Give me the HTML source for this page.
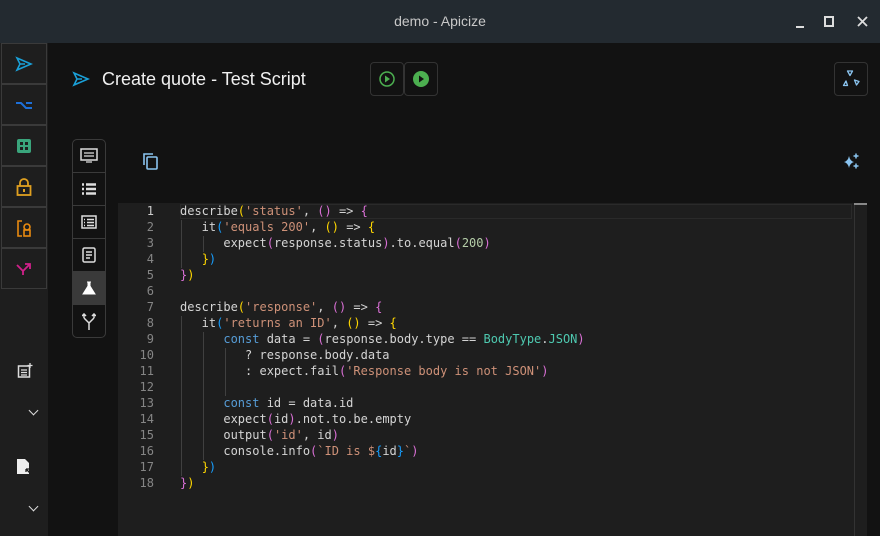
<!DOCTYPE html>
<html><head><meta charset="utf-8"><style>
*{margin:0;padding:0;box-sizing:border-box}
body{width:880px;height:536px;overflow:hidden;background:#121212;font-family:"Liberation Sans",sans-serif;position:relative}
.tb{position:absolute;left:0;top:0;width:880px;height:43px;background:#232a30;color:#c8c8c8;font-size:14px;text-align:center;line-height:42px}
.side{position:absolute;left:0;top:43px;width:48px;height:493px;background:#1e1e1e}
.sb{position:absolute;left:1px;width:46px;height:41px;border:1px solid #3a3a3a;display:flex;align-items:center;justify-content:center}
.vt{position:absolute;left:72px;top:139px;width:34px;height:199px;border:1px solid #3a3a3a;border-radius:5px;overflow:hidden}
.vt div{height:33px;border-bottom:1px solid #3a3a3a;display:flex;align-items:center;justify-content:center}
.btn{position:absolute;top:62px;width:34px;height:34px;border:1px solid #333;border-radius:4px;display:flex;align-items:center;justify-content:center}
.ed{position:absolute;left:118px;top:203px;width:749px;height:333px;background:#1e1e1e;font-family:"DejaVu Sans Mono",monospace;font-size:12px;color:#d4d4d4}
.ln{position:absolute;left:0;width:36px;text-align:right;color:#858585}
.cd{position:absolute;left:62px;white-space:pre}
.k{color:#569cd6}.s{color:#ce9178}.n{color:#b5cea8}.t{color:#4ec9b0}
.y{color:#ffd700}.p{color:#da70d6}.b{color:#179fff}
.g{position:absolute;width:1px;background:#404040}
</style></head><body>
<div class="tb">demo - Apicize
<span style="position:absolute;left:467px;top:0;width:0"></span>
<span style="position:absolute;left:467px"></span>
<span style="position:absolute;left:467px"></span>
<span style="position:absolute;left:796px;top:26px;width:8px;height:2px;background:#ddd"></span>
<span style="position:absolute;left:824px;top:16px;width:10px;height:11px;border:2px solid #ddd"></span>
<svg style="position:absolute;left:857px;top:16px" width="11" height="11"><path d="M1 1l9 9M10 1l-9 9" stroke="#ddd" stroke-width="1.8"/></svg>
</div>
<div class="side">
<div class="sb" style="top:0"><svg width="18" height="16" viewBox="0 0 18 16"><path d="M2 2L16 8L2 14L5 8Z M5 8H10" fill="none" stroke="#1aa0d8" stroke-width="1.6"/></svg></div>
<div class="sb" style="top:41px"><svg width="18" height="12"><path d="M1 4h5l5 5h6M11 4h6" fill="none" stroke="#1d6fd8" stroke-width="2"/></svg></div>
<div class="sb" style="top:82px"><svg width="14" height="14"><rect width="14" height="14" rx="2" fill="#3aa57c"/><rect x="3" y="3" width="3" height="3" fill="#1e1e1e"/><rect x="8" y="3" width="3" height="3" fill="#1e1e1e"/><rect x="3" y="8" width="3" height="3" fill="#1e1e1e"/><rect x="8" y="8" width="3" height="3" fill="#1e1e1e"/></svg></div>
<div class="sb" style="top:123px"><svg width="16" height="18"><path d="M4 8V5a4 4 0 0 1 8 0v3" fill="none" stroke="#e0a020" stroke-width="1.8"/><rect x="1.5" y="8" width="13" height="9" fill="none" stroke="#e0a020" stroke-width="1.8"/><rect x="7" y="11" width="2" height="3" fill="#e0a020"/></svg></div>
<div class="sb" style="top:164px"><svg width="16" height="18"><path d="M6 2H2v15h4" fill="none" stroke="#e88a10" stroke-width="1.6"/><circle cx="11" cy="8" r="3" fill="none" stroke="#e88a10" stroke-width="1.6"/><rect x="8" y="11" width="6" height="6" fill="none" stroke="#e88a10" stroke-width="1.6"/></svg></div>
<div class="sb" style="top:205px"><svg width="18" height="14"><path d="M2 3l6 6v4M8 9l7-7M10 2h5v5" fill="none" stroke="#d0208a" stroke-width="1.8"/></svg></div>
<svg style="position:absolute;left:17px;top:319px" width="16" height="16"><rect x="1.5" y="4" width="11" height="11" fill="none" stroke="#ddd" stroke-width="1.5"/><path d="M4 8h6M4 10.5h6M4 13h6M13 1v5M10.5 3.5h5" stroke="#ddd" stroke-width="1.3"/></svg>
<div style="position:absolute;left:30px;top:364px;width:7px;height:7px;border-right:1.5px solid #ddd;border-bottom:1.5px solid #ddd;transform:rotate(45deg)"></div>
<svg style="position:absolute;left:16px;top:415px" width="16" height="18"><path d="M1 1h8l4 4v11H1z" fill="#eee"/><path d="M10 11l5 5M10 11h3M10 11v3" stroke="#1e1e1e" stroke-width="1.3"/></svg>
<div style="position:absolute;left:30px;top:460px;width:7px;height:7px;border-right:1.5px solid #ddd;border-bottom:1.5px solid #ddd;transform:rotate(45deg)"></div>
</div>
<svg style="position:absolute;left:72px;top:71px" width="18" height="16" viewBox="0 0 18 16"><path d="M2 2L16 8L2 14L5 8Z M5 8H10" fill="none" stroke="#1aa0d8" stroke-width="1.6"/></svg>
<div style="position:absolute;left:102px;top:69px;color:#f0f0f0;font-size:18px">Create quote - Test Script</div>
<div class="btn" style="left:370px"><svg width="18" height="18"><circle cx="9" cy="9" r="7" fill="none" stroke="#4caf50" stroke-width="1.5"/><path d="M7 5.5l5 3.5-5 3.5z" fill="#4caf50"/></svg></div>
<div class="btn" style="left:404px"><svg width="18" height="18"><circle cx="9" cy="9" r="8" fill="#4caf50"/><path d="M7 5.5l5 3.5-5 3.5z" fill="#121212"/></svg></div>
<div class="btn" style="left:834px"><svg width="20" height="20"><path d="M6.5 2h5l-2.5 4.5z M2.5 16.5l2.5-4.5 1.5 4.5z M13.5 11l4.5 1.5-2.5 3.5z" fill="none" stroke="#8ac4f0" stroke-width="1.3" stroke-linejoin="round"/></svg></div>
<div class="vt">
<div><svg width="18" height="16"><rect x="1" y="1" width="16" height="11" fill="none" stroke="#ddd" stroke-width="1.5"/><path d="M4 5h10M4 8h10M6 14h6" stroke="#ddd" stroke-width="1.3"/></svg></div>
<div><svg width="16" height="12"><path d="M1 1.5h2M5 1.5h10M1 6h2M5 6h10M1 10.5h2M5 10.5h10" stroke="#ddd" stroke-width="2.5"/></svg></div>
<div><svg width="16" height="14"><rect x="1" y="1" width="14" height="12" fill="none" stroke="#ddd" stroke-width="1.5"/><path d="M3 4.5h1M6 4.5h7M3 7.5h1M6 7.5h7M3 10.5h1M6 10.5h7" stroke="#ddd" stroke-width="1.5"/></svg></div>
<div><svg width="14" height="16"><rect x="1" y="1" width="12" height="14" rx="1.5" fill="none" stroke="#ddd" stroke-width="1.5"/><path d="M4 5h6M4 8h6M4 11h4" stroke="#ddd" stroke-width="1.5"/></svg></div>
<div style="background:#3a3a3a"><svg width="14" height="14"><path d="M5 1h4M6 1v4L1 13h12L8 5V1" fill="#fff" stroke="#fff" stroke-width="1"/></svg></div>
<div style="border:none"><svg width="14" height="18"><path d="M7 17V10L2 5M7 10l5-5M2 1v4h0M12 1v4M0 3l2-2 2 2M10 3l2-2 2 2" fill="none" stroke="#ddd" stroke-width="1.5"/></svg></div>
</div>
<svg style="position:absolute;left:142px;top:152px" width="18" height="18"><rect x="5" y="5" width="10" height="12" rx="1" fill="none" stroke="#8ac4f0" stroke-width="1.6"/><path d="M2 13V2h9" fill="none" stroke="#8ac4f0" stroke-width="1.6"/></svg>
<svg style="position:absolute;left:842px;top:153px" width="20" height="18"><path d="M7 3Q8 8 12 9Q8 10 7 15Q6 10 2 9Q6 8 7 3Z" fill="#8ac4f0"/><path d="M14 0.5v5M11.5 3h5M14 10.5v5M11.5 13h5" stroke="#8ac4f0" stroke-width="1.5"/></svg>
<div class="ed">
<div style="position:absolute;left:62px;top:1px;width:672px;height:15px;border:1px solid #2a2a2a"></div>
<div style="position:absolute;left:736px;top:0;width:13px;height:333px;border-left:1px solid #333"></div>
<div style="position:absolute;left:736px;top:0;width:13px;height:2px;background:#888"></div>
<div class="g" style="left:63px;top:17px;height:48px"></div>
<div class="g" style="left:85px;top:33px;height:16px"></div>
<div class="g" style="left:63px;top:113px;height:160px"></div>
<div class="g" style="left:85px;top:129px;height:128px"></div>
<div class="g" style="left:107px;top:145px;height:48px"></div>
<div class="ln" style="top:0;line-height:16px;color:#858585"><span style="color:#ccc">1</span><br>2<br>3<br>4<br>5<br>6<br>7<br>8<br>9<br>10<br>11<br>12<br>13<br>14<br>15<br>16<br>17<br>18</div>
<div class="cd" style="top:0;line-height:16px">describe<span class="y">(</span><span class="s">'status'</span>, <span class="p">()</span> =&gt; <span class="p">{</span>
   it<span class="b">(</span><span class="s">'equals 200'</span>, <span class="y">()</span> =&gt; <span class="y">{</span>
      expect<span class="p">(</span>response.status<span class="p">)</span>.to.equal<span class="p">(</span><span class="n">200</span><span class="p">)</span>
   <span class="y">}</span><span class="b">)</span>
<span class="p">}</span><span class="y">)</span>

describe<span class="y">(</span><span class="s">'response'</span>, <span class="p">()</span> =&gt; <span class="p">{</span>
   it<span class="b">(</span><span class="s">'returns an ID'</span>, <span class="y">()</span> =&gt; <span class="y">{</span>
      <span class="k">const</span> data = <span class="p">(</span>response.body.type == <span class="t">BodyType</span>.<span class="t">JSON</span><span class="p">)</span>
         ? response.body.data
         : expect.fail<span class="p">(</span><span class="s">'Response body is not JSON'</span><span class="p">)</span>

      <span class="k">const</span> id = data.id
      expect<span class="p">(</span>id<span class="p">)</span>.not.to.be.empty
      output<span class="p">(</span><span class="s">'id'</span>, id<span class="p">)</span>
      console.info<span class="p">(</span><span class="s">`ID is $</span><span class="b">{</span>id<span class="b">}</span><span class="s">`</span><span class="p">)</span>
   <span class="y">}</span><span class="b">)</span>
<span class="p">}</span><span class="y">)</span></div>
</div>
</body></html>
